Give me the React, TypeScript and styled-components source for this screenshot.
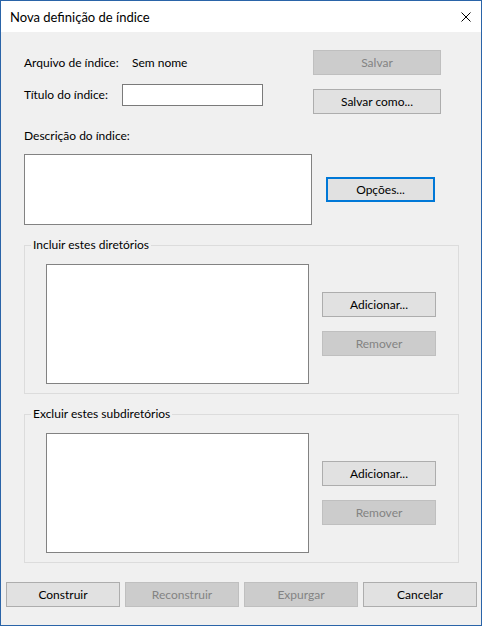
import React from "react";
import styled, { createGlobalStyle } from "styled-components";

const Global = createGlobalStyle`
  html, body { margin: 0; padding: 0; background: #ffffff; }
  body { font-family: Lato, "Noto Sans", "Liberation Sans", sans-serif; font-size: 12px; color: #000; }
  * { box-sizing: border-box; }
`;

const Window = styled.div`
  width: 482px;
  height: 626px;
  border: 1px solid #2a64a8;
  display: flex;
  flex-direction: column;
  background: #f0f0f0;
`;

const TitleBar = styled.div`
  height: 31px;
  flex: none;
  background: #ffffff;
  display: flex;
  align-items: center;
  justify-content: space-between;
  padding: 0 10px 0 9px;
  font-size: 13px;
  line-height: 16px;
`;

const CloseGlyph = styled.svg`
  width: 10px;
  height: 10px;
  display: block;
`;

const Body = styled.div`
  flex: 1;
  display: flex;
  flex-direction: column;
`;

const TopSection = styled.div`
  display: flex;
  padding-left: 23px;
`;

const LeftCol = styled.div`
  width: 289px;
  display: flex;
  flex-direction: column;
  padding-top: 23px;
`;

const RightCol = styled.div`
  display: flex;
  flex-direction: column;
  align-items: flex-start;
  padding-top: 18px;
`;

const Row = styled.div<{ $mt?: number }>`
  display: flex;
  align-items: center;
  margin-top: ${(p) => p.$mt ?? 0}px;
`;

const Label = styled.span<{ $w?: number }>`
  line-height: 16px;
  white-space: nowrap;
  width: ${(p) => (p.$w ? `${p.$w}px` : "auto")};
  flex: none;
`;

const TextInput = styled.div`
  width: 141px;
  height: 22px;
  background: #fff;
  border: 1px solid #7a7a7a;
`;

const TextArea = styled.div`
  width: 288px;
  height: 71px;
  margin-top: 10px;
  background: #fff;
  border: 1px solid #828282;
`;

const Button = styled.div<{
  $w: number;
  $disabled?: boolean;
  $default?: boolean;
  $mt?: number;
  $ml?: number;
}>`
  width: ${(p) => p.$w}px;
  height: 25px;
  margin-top: ${(p) => p.$mt ?? 0}px;
  margin-left: ${(p) => p.$ml ?? 0}px;
  display: flex;
  align-items: center;
  justify-content: center;
  line-height: 16px;
  background: ${(p) => (p.$disabled ? "#cccccc" : "#e1e1e1")};
  color: ${(p) => (p.$disabled ? "#838383" : "#000")};
  border: ${(p) =>
    p.$default ? "2px solid #0078d7" : p.$disabled ? "1px solid #bfbfbf" : "1px solid #adadad"};
  white-space: nowrap;
`;

const Group = styled.fieldset<{ $mt: number }>`
  margin: ${(p) => p.$mt}px 22px 0 23px;
  padding: 0;
  min-width: 0;
  border: 1px solid #dcdcdc;
`;

const Legend = styled.legend`
  margin-left: 6px;
  padding: 0 2px;
  line-height: 16px;
  font-size: 12px;
`;

const GroupInner = styled.div`
  display: flex;
  padding: 11px 0 9px 21px;
  gap: 13px;
`;

const ListBox = styled.div`
  width: 263px;
  height: 120px;
  background: #fff;
  border: 1px solid #828282;
  flex: none;
`;

const GroupButtons = styled.div`
  display: flex;
  flex-direction: column;
  padding-top: 28px;
  gap: 14px;
`;

const Footer = styled.div`
  display: flex;
  gap: 5px;
  padding: 0 4px 0 5px;
  margin-top: 19px;
`;

const FooterButton = styled(Button)`
  flex: 1;
`;

function DirGroup({ title, mt }: { title: string; mt: number }) {
  return (
    <Group $mt={mt}>
      <Legend>{title}</Legend>
      <GroupInner>
        <ListBox />
        <GroupButtons>
          <Button $w={114}>Adicionar...</Button>
          <Button $w={114} $disabled>
            Remover
          </Button>
        </GroupButtons>
      </GroupInner>
    </Group>
  );
}

export default function App() {
  return (
    <>
      <Global />
      <Window>
        <TitleBar>
          <span>Nova definição de índice</span>
          <CloseGlyph viewBox="0 0 10 10">
            <path d="M0.5 0.5 L9.5 9.5 M9.5 0.5 L0.5 9.5" stroke="#000" strokeWidth="1" fill="none" />
          </CloseGlyph>
        </TitleBar>
        <Body>
          <TopSection>
            <LeftCol>
              <Row>
                <Label $w={108}>Arquivo de índice:</Label>
                <Label>Sem nome</Label>
              </Row>
              <Row $mt={13}>
                <Label $w={98}>Título do índice:</Label>
                <TextInput />
              </Row>
              <Row $mt={22}>
                <Label>Descrição do índice:</Label>
              </Row>
              <TextArea />
            </LeftCol>
            <RightCol>
              <Button $w={128} $disabled>
                Salvar
              </Button>
              <Button $w={128} $mt={14}>
                Salvar como...
              </Button>
              <Button $w={109} $mt={63} $ml={13} $default>
                Opções...
              </Button>
            </RightCol>
          </TopSection>
          <DirGroup title="Incluir estes diretórios" mt={12} />
          <DirGroup title="Excluir estes subdiretórios" mt={12} />
          <Footer>
            <FooterButton $w={114}>Construir</FooterButton>
            <FooterButton $w={114} $disabled>
              Reconstruir
            </FooterButton>
            <FooterButton $w={114} $disabled>
              Expurgar
            </FooterButton>
            <FooterButton $w={114}>Cancelar</FooterButton>
          </Footer>
        </Body>
      </Window>
    </>
  );
}
